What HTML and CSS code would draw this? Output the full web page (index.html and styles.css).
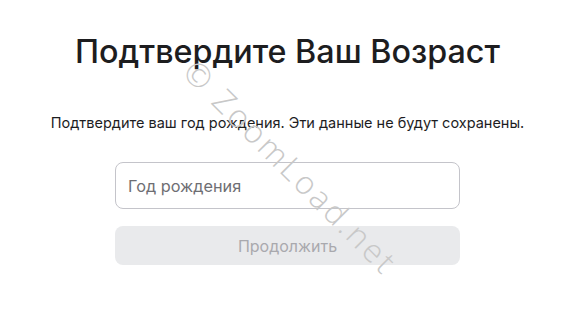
FILE: index.html
```html
<!DOCTYPE html>
<html lang="ru">
<head>
  <meta charset="UTF-8">
  <meta name="viewport" content="width=device-width, initial-scale=1.0">
  <title>Подтвердите Ваш Возраст</title>
  <link rel="stylesheet" href="styles.css">
</head>
<body>

  <div class="age-gate">
    <h1 class="age-title">Подтвердите Ваш Возраст</h1>
    <p class="age-note">Подтвердите ваш год рождения. Эти данные не будут сохранены.</p>
    <form class="age-form">
      <input type="text" class="age-input" placeholder="Год рождения">
      <button type="submit" class="age-button" disabled>Продолжить</button>
    </form>
  </div>

  <div class="watermark">© ZoomLoad.net</div>

</body>
</html>
```

FILE: styles.css
```css
body {
  font-family: Inter, "Noto Sans", Arial, sans-serif;
  margin: 0;
  padding: 0;
  background-color: #ffffff;
  color: #1d1d1f;
  overflow: hidden;
}
.age-gate {
  display: flex;
  flex-direction: column;
  align-items: center;
  padding-top: 32px;
}
.age-title {
  margin: 0;
  font-size: 32.3px;
  font-weight: 500;
  line-height: 40px;
}
.age-note {
  margin: 42px 0 0;
  font-size: 14.5px;
  line-height: 18px;
}
.age-form {
  width: 345px;
  margin-top: 30px;
  display: flex;
  flex-direction: column;
  gap: 17px;
}
.age-input {
  box-sizing: border-box;
  height: 47px;
  padding: 0 12px;
  border: 1px solid #c4c4ca;
  border-radius: 8px;
  font-family: inherit;
  font-size: 16.3px;
  color: #1d1d1f;
  outline: none;
}
.age-input::placeholder {
  color: #6e6e73;
}
.age-button {
  height: 39px;
  border: none;
  border-radius: 8px;
  background-color: #e9eaec;
  color: #a9a9ae;
  font-family: inherit;
  font-size: 16px;
}
.watermark {
  position: absolute;
  left: 205px;
  top: 50px;
  font-family: "Open Sans", sans-serif;
  font-size: 32px;
  font-weight: 300;
  letter-spacing: 3px;
  color: #c8c8c8;
  transform: rotate(45deg);
  transform-origin: 0 0;
  pointer-events: none;
}
```
